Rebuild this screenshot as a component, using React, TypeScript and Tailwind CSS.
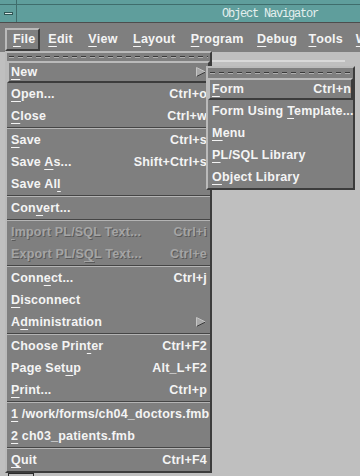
import React from "react";

type Entry =
  | { sep: true }
  | {
      sep?: false;
      label: string;
      u?: number;
      keys?: string;
      arrow?: boolean;
      off?: boolean;
      active?: boolean;
    };

const fileMenu: Entry[] = [
  { label: "New", u: 0, arrow: true, active: true },
  { label: "Open...", u: 0, keys: "Ctrl+o" },
  { label: "Close", u: 0, keys: "Ctrl+w" },
  { sep: true },
  { label: "Save", u: 0, keys: "Ctrl+s" },
  { label: "Save As...", u: 5, keys: "Shift+Ctrl+s" },
  { label: "Save All", u: 7 },
  { sep: true },
  { label: "Convert...", u: 3 },
  { sep: true },
  { label: "Import PL/SQL Text...", u: 0, keys: "Ctrl+i", off: true },
  { label: "Export PL/SQL Text...", u: 11, keys: "Ctrl+e", off: true },
  { sep: true },
  { label: "Connect...", u: 4, keys: "Ctrl+j" },
  { label: "Disconnect", u: 0 },
  { label: "Administration", u: 1, arrow: true },
  { sep: true },
  { label: "Choose Printer", u: 11, keys: "Ctrl+F2" },
  { label: "Page Setup", u: 8, keys: "Alt_L+F2" },
  { label: "Print...", u: 0, keys: "Ctrl+p" },
  { sep: true },
  { label: "1 /work/forms/ch04_doctors.fmb", u: 0 },
  { label: "2 ch03_patients.fmb", u: 0 },
  { sep: true },
  { label: "Quit", u: 0, keys: "Ctrl+F4" },
];

const newMenu: Entry[] = [
  { label: "Form", u: 0, keys: "Ctrl+n", active: true },
  { label: "Form Using Template...", u: 11 },
  { label: "Menu", u: 0 },
  { label: "PL/SQL Library", u: 0 },
  { label: "Object Library", u: 0 },
];

const raised =
  "border-2 border-t-[#bababa] border-l-[#bababa] border-b-[#3c3c3c] border-r-[#3c3c3c]";

// per-item padding so the labels land where the X font put them
const menuBar = [
  { name: "File", cls: `${raised} pl-[6px] pr-[3px]` },
  { name: "Edit", cls: "pl-[8px] pr-[7.5px]" },
  { name: "View", cls: "pl-[8px] pr-[7.5px]" },
  { name: "Layout", cls: "pl-[8px] pr-[7.5px]" },
  { name: "Program", cls: "pl-[8px] pr-[5.5px]" },
  { name: "Debug", cls: "pl-[8px] pr-[3.5px]" },
  { name: "Tools", cls: "pl-[8px] pr-[5px]" },
  { name: "Window", cls: "pl-[8px] pr-[7.5px]" },
];

function Mnemonic({ text, u }: { text: string; u?: number }) {
  if (u === undefined) return <>{text}</>;
  return (
    <>
      {text.slice(0, u)}
      <span className="underline decoration-1 underline-offset-[3px]">{text[u]}</span>
      {text.slice(u + 1)}
    </>
  );
}

function Arrow() {
  return (
    <svg width="10" height="10" viewBox="0 0 10 10">
      <polygon points="0.5,0.5 9.5,5 0.5,9.5" fill="#a9a9a9" />
      <polyline points="0.5,9.5 9.5,5" stroke="#3c3c3c" strokeWidth="1" fill="none" />
      <polyline points="0.5,9.5 0.5,0.5 9.5,5" stroke="#c4c4c4" strokeWidth="1" fill="none" />
    </svg>
  );
}

function TearOff({ h }: { h: string }) {
  return (
    <div className={`${h} shrink-0 flex items-center px-[2px]`}>
      <div className="w-full flex flex-col">
        <div className="h-px bg-[repeating-linear-gradient(90deg,#3a3a3a_0_5px,transparent_5px_9px)]" />
        <div className="h-px bg-[repeating-linear-gradient(90deg,#b0b0b0_0_5px,transparent_5px_9px)]" />
      </div>
    </div>
  );
}

function Row({ e }: { e: Entry }) {
  if (e.sep) {
    return (
      <div className="flex flex-col shrink-0">
        <div className="h-px bg-[#454545]" />
        <div className="h-px bg-[#b4b4b4]" />
      </div>
    );
  }
  const color = e.off
    ? "text-[#a5a5a5] [text-shadow:1px_1px_0_#5a5a5a]"
    : "text-[#f4f4f4]";
  return (
    <div
      className={`h-[22px] shrink-0 flex items-center justify-between whitespace-nowrap ${
        e.active ? `${raised} pl-[2px] pr-0` : "pl-[4px] pr-[3px]"
      } ${color}`}
    >
      <span>
        <Mnemonic text={e.label} u={e.u} />
      </span>
      {e.keys && <span>{e.keys}</span>}
      {e.arrow && (
        <span className={`flex items-center ${e.active ? "pr-[2px]" : "pr-[1px]"}`}>
          <Arrow />
        </span>
      )}
    </div>
  );
}

export default function App() {
  return (
    <div className="relative w-[360px] h-[476px] overflow-hidden bg-[#bfbfbf] font-['Liberation_Sans',Arial,sans-serif] text-[12.5px] tracking-[0.2px] font-bold">
      {/* window frame top */}
      <div className="flex h-[5px] bg-[#5f9e9c] border-b border-[#3f6d6c]">
        <div className="w-[17px] border-r border-[#3f6d6c]" />
      </div>
      <div className="flex h-[17px] bg-[#5f9e9c]">
        <div className="w-[17px] border-r border-[#3f6d6c] flex items-center justify-center">
          <div className="w-[9px] h-[3px] bg-[#d6e6e5] border border-[#2f5554]" />
        </div>
        <div className="pl-[205px] pt-[1px] font-['Liberation_Mono',monospace] font-normal text-[12px] tracking-[-1.2px] text-[#e4efee] leading-[16px]">
          Object Navigator
        </div>
      </div>
      <div className="h-px bg-[#4d4d4d]" />

      {/* menu bar */}
      <div className="h-[29px] bg-[#7f7f7f] flex items-start pl-[5px] pt-[5px] text-[#f4f4f4] whitespace-nowrap">
        {menuBar.map((m) => (
          <div key={m.name} className={`h-[23px] shrink-0 flex items-center ${m.cls}`}>
            <Mnemonic text={m.name} u={0} />
          </div>
        ))}
      </div>

      {/* window content behind the menus */}
      <div className="flex pl-[212px] pt-[8px]">
        <div className="h-[2px] w-[133px] bg-[#d9d9d9]" />
      </div>
      <div className="flex items-end gap-[36px] pl-[8px] pt-[411px]">
        <div className="w-[26px] h-[6px] border border-[#2a2a2a] border-b-0" />
        <div className="w-[2px] h-[2px] bg-[#2a2a2a]" />
      </div>

      {/* File menu */}
      <div className={`absolute left-[5px] top-[51px] w-[207px] flex flex-col bg-[#7f7f7f] ${raised}`}>
        <TearOff h="h-[8px]" />
        {fileMenu.map((e, i) => (
          <Row key={i} e={e} />
        ))}
      </div>

      {/* New submenu */}
      <div className={`absolute left-[206px] top-[66px] w-[149px] flex flex-col bg-[#7f7f7f] ${raised}`}>
        <TearOff h="h-[10px]" />
        {newMenu.map((e, i) => (
          <Row key={i} e={e} />
        ))}
      </div>
    </div>
  );
}
